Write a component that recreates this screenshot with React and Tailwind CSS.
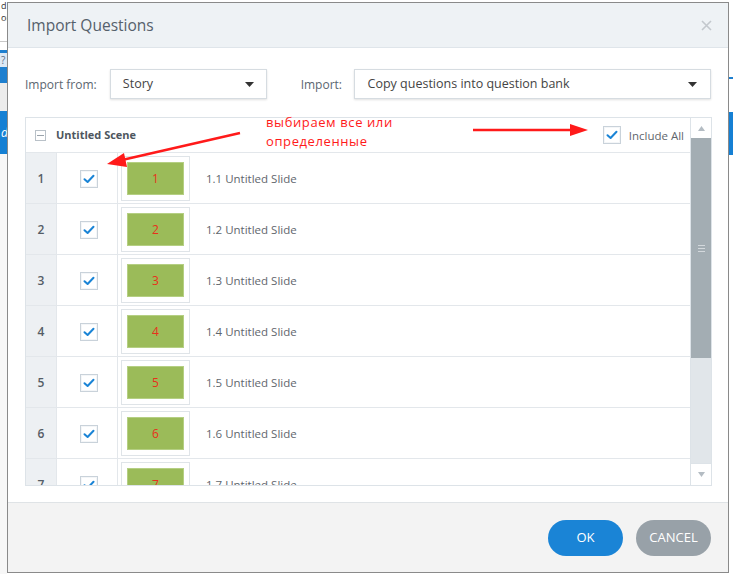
import React from "react";

function Check() {
  return (
    <div className="w-[18px] h-[18px] border border-[#c9d2da] bg-white flex items-center justify-center shadow-[inset_0_0_0_1px_#f4f6f8]">
      <svg width="12" height="10" viewBox="0 0 12 10">
        <path d="M1.5 5.2 L4.6 8 L10.5 1.8" fill="none" stroke="#1a84d6" strokeWidth="2" strokeLinecap="round" strokeLinejoin="round" />
      </svg>
    </div>
  );
}

function Caret() {
  return (
    <svg width="9" height="5" viewBox="0 0 9 5">
      <path d="M0 0 L9 0 L4.5 5 Z" fill="#333" />
    </svg>
  );
}

function Row({ n }) {
  return (
    <div className="flex h-[51px] border-b border-[#e3e7eb] shrink-0">
      <div className="w-[31px] bg-[#edf0f3] border-r border-[#e3e7eb] flex items-center justify-center pt-[2px] text-[12px] font-semibold text-[#555d66]">
        {n}
      </div>
      <div className="w-[61px] border-r border-[#e3e7eb] flex items-center justify-center pl-[3px] pt-[1px]">
        <Check />
      </div>
      <div className="flex items-start pt-[3px] pl-[3px]">
        <div className="w-[69px] h-[45px] border border-[#dfe4e8] bg-white p-[5px]">
          <div className="w-full h-full bg-[#9bbb59] border border-[#b5cf83] flex items-center justify-center text-[12px] text-[#e8301c]">
            {n}
          </div>
        </div>
      </div>
      <div className="flex items-center pl-[16px] pt-[2px] text-[11.5px] text-[#5f666d]">
        1.{n} Untitled Slide
      </div>
    </div>
  );
}

export default function App() {
  return (
    <div className="w-[733px] h-[574px] relative overflow-hidden bg-white font-['Open_Sans',sans-serif] flex">
      {/* left background strip */}
      <div className="w-[7px] shrink-0 flex flex-col overflow-hidden">
        <div className="h-[41px] flex flex-col text-[9px] leading-[12px] text-[#333] pl-[1px]">
          <div className="h-[12px]">d</div>
          <div className="h-[12px]">or</div>
        </div>
        <div className="h-px bg-[#c8c8c8]" />
        <div className="h-[8px]" />
        <div className="h-[3px] bg-[#1e7fcf]" />
        <div className="h-[14px] bg-[#dce8f4] text-[10px] leading-[14px] text-[#5a6f86] pl-[1px]">?</div>
        <div className="h-[16px] bg-[#1e7fcf]" />
        <div className="h-[28px] bg-[#ececec]" />
        <div className="h-[43px] bg-[#1580d4] text-[12px] italic text-white leading-[43px] pl-[1px]">d</div>
        <div className="flex-1 bg-[#f7f7f7]" />
      </div>

      {/* dialog */}
      <div className="w-[722px] h-[571px] mt-[2px] shrink-0 border border-[#8a8a8a] flex flex-col bg-white">
        <div className="h-[45px] bg-[#eef2f5] border-b border-[#dfe5ea] flex items-center justify-between pl-[19px] pr-[16px] shrink-0">
          <span className="text-[15.5px] text-[#55606b] pt-[2px]">Import Questions</span>
          <svg width="11" height="11" viewBox="0 0 11 11">
            <path d="M1 1 L10 10 M10 1 L1 10" stroke="#c3c8cd" strokeWidth="1.6" />
          </svg>
        </div>

        <div className="flex-1 flex flex-col px-[17px] pt-[21px]">
          <div className="flex items-center h-[30px]">
            <span className="text-[12px] text-[#5b6670] w-[85px] pt-[1px]">Import from:</span>
            <div className="w-[157px] h-[30px] border border-[#d6dce1] shadow-[0_1px_2px_rgba(0,0,0,0.12)] flex items-center justify-between pl-[12px] pr-[12px] text-[12.5px] text-[#444]">
              <span className="pt-[1px]">Story</span>
              <Caret />
            </div>
            <span className="text-[12px] text-[#5b6670] ml-[34px] w-[53px] pt-[1px]">Import:</span>
            <div className="w-[358px] h-[30px] border border-[#d6dce1] shadow-[0_1px_2px_rgba(0,0,0,0.12)] flex items-center justify-between pl-[13px] pr-[13px] text-[12.5px] text-[#444]">
              <span className="pt-[1px]">Copy questions into question bank</span>
              <Caret />
            </div>
          </div>

          <div className="mt-[18px] w-[687px] h-[369px] border border-[#dde3e8] flex">
            <div className="flex-1 flex flex-col overflow-hidden">
              <div className="h-[35px] border-b border-[#e3e7eb] flex items-center shrink-0">
                <div className="ml-[9px] w-[11px] h-[11px] border border-[#b9c1c8] flex items-center justify-center">
                  <div className="w-[7px] h-px bg-[#9aa3ab]" />
                </div>
                <span className="ml-[10px] text-[11px] font-bold text-[#4e565e] pt-[1px]">Untitled Scene</span>
                <div className="flex-1" />
                <Check />
                <span className="ml-[8px] mr-[6px] text-[11.5px] text-[#5f666d] pt-[1px]">Include All</span>
              </div>
              {[1, 2, 3, 4, 5, 6, 7].map((n) => (
                <Row key={n} n={n} />
              ))}
            </div>
            <div className="w-[21px] border-l border-[#dde3e8] flex flex-col shrink-0">
              <div className="h-[20px] bg-white flex items-center justify-center">
                <svg width="7" height="5" viewBox="0 0 7 5"><path d="M0 5 L7 5 L3.5 0 Z" fill="#b4bcc3" /></svg>
              </div>
              <div className="h-[220px] bg-[#a3adb3] flex flex-col items-center justify-center gap-[2px]">
                <div className="w-[7px] h-px bg-[#d3d8dc]" />
                <div className="w-[7px] h-px bg-[#d3d8dc]" />
                <div className="w-[7px] h-px bg-[#d3d8dc]" />
              </div>
              <div className="flex-1 bg-[#e1e6ea]" />
              <div className="h-[22px] bg-white border-t border-[#dde3e8] flex items-center justify-center">
                <svg width="7" height="5" viewBox="0 0 7 5"><path d="M0 0 L7 0 L3.5 5 Z" fill="#b4bcc3" /></svg>
              </div>
            </div>
          </div>
        </div>

        <div className="h-[70px] border-t border-[#dfe3e6] bg-[#f3f3f3] flex items-start justify-end gap-[13px] pt-[17px] pr-[17px] shrink-0">
          <button className="w-[75px] h-[36px] rounded-full bg-[#1a84d6] text-white text-[13px]">OK</button>
          <button className="w-[75px] h-[36px] rounded-full bg-[#98a1a8] text-white text-[13px]">CANCEL</button>
        </div>
      </div>

      {/* right background strip */}
      <div className="flex-1 flex flex-col">
        <div className="h-[77px]" />
        <div className="h-[2px] bg-[#1e7fcf]" />
        <div className="h-[33px]" />
        <div className="h-[43px] bg-[#1580d4]" />
        <div className="flex-1" />
      </div>

      {/* annotations overlay */}
      <div className="absolute left-[266px] top-[113px] text-[13px] leading-[19px] tracking-[0.6px] text-[#ff1a1a] pointer-events-none">
        <div>выбираем все или</div>
        <div>определенные</div>
      </div>
      <svg className="absolute inset-0 pointer-events-none" width="733" height="574" viewBox="0 0 733 574">
        <line x1="240" y1="133" x2="122" y2="160" stroke="#ff1a1a" strokeWidth="2.5" />
        <path d="M107 164 L124 153 L127 167 Z" fill="#ff1a1a" />
        <line x1="473" y1="130" x2="572" y2="130" stroke="#ff1a1a" strokeWidth="2.5" />
        <path d="M588 130 L570 124 L570 136 Z" fill="#ff1a1a" />
      </svg>
    </div>
  );
}
